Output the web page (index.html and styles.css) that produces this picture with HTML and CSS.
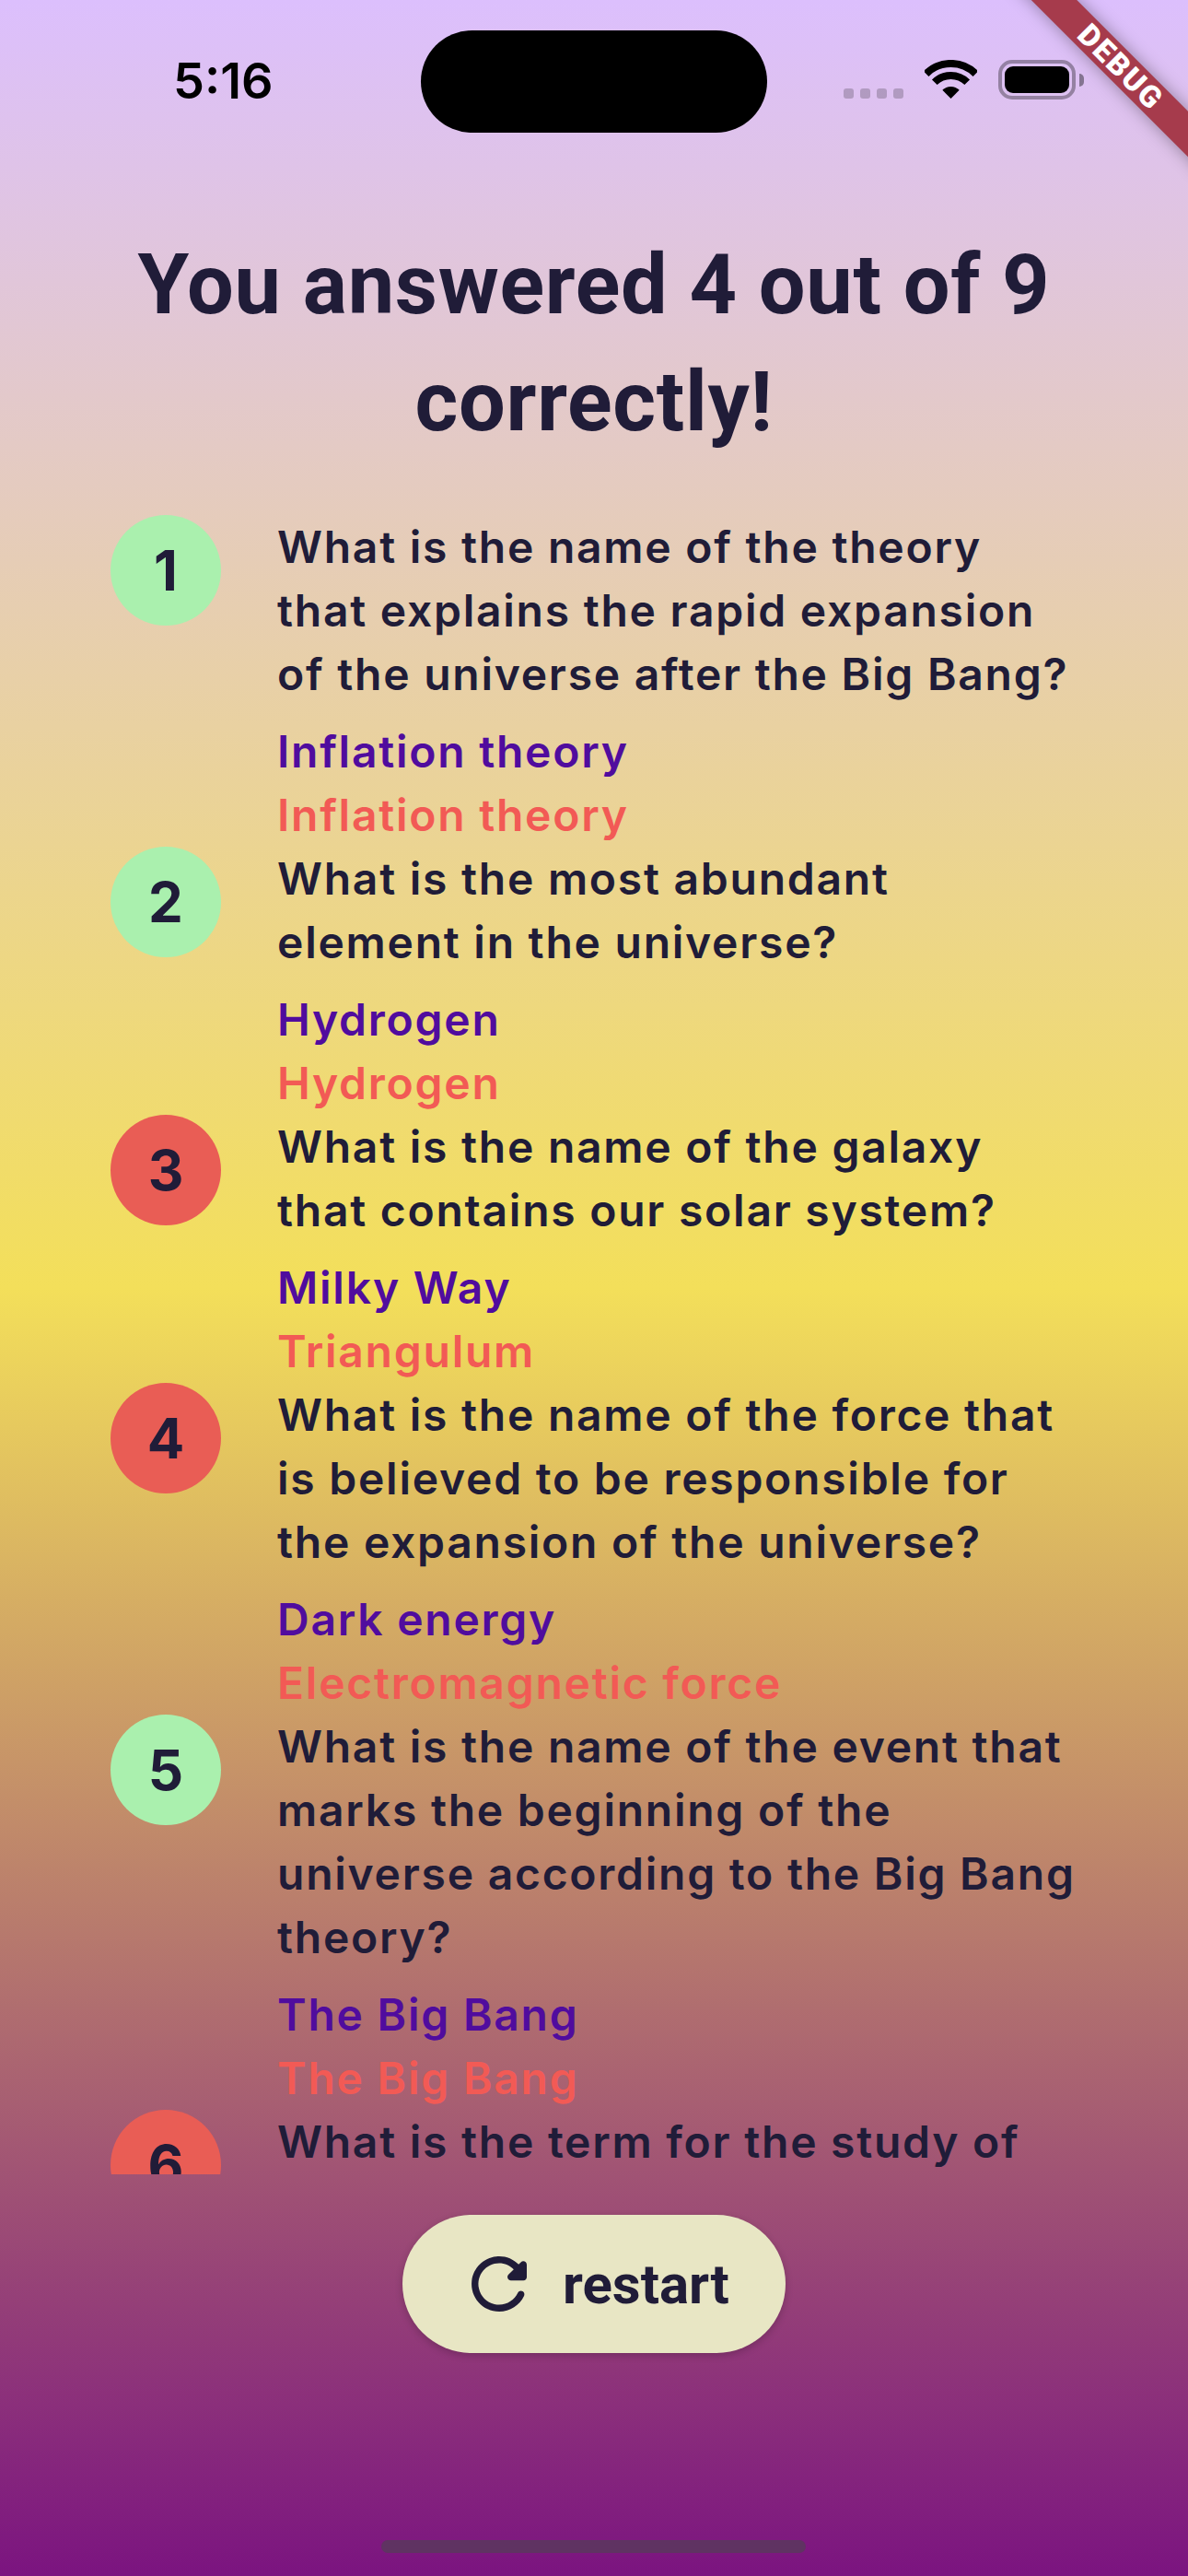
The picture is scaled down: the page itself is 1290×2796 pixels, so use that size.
FILE: index.html
```html
<!DOCTYPE html>
<html lang="en">
<head>
  <meta charset="UTF-8" />
  <title>Quiz Results</title>
  <link rel="stylesheet" href="styles.css">
</head>
<body>

<main class="phone">
  <div class="status-bar">
    <span class="time">5:16</span>
    <div class="island"></div>
    <div class="status-icons">
      <div class="signal"><i></i><i></i><i></i><i></i></div>
      <svg class="wifi" width="57" height="42" viewBox="0 0 57 42">
        <path d="M1.6 15.1A38 38 0 0 1 55.4 15.1" fill="none" stroke="#000" stroke-width="8"/>
        <path d="M10.8 24.3A25 25 0 0 1 46.2 24.3" fill="none" stroke="#000" stroke-width="8"/>
        <path d="M28.5 42L19.3 32.8A13 13 0 0 1 37.7 32.8Z" fill="#000"/>
      </svg>
      <div class="battery"><div class="battery-level"></div></div>
      <div class="battery-cap"></div>
    </div>
  </div>

  <h1 class="score">You answered 4 out of 9 correctly!</h1>

  <section class="summary">
    <article class="row">
      <div class="badge right">1</div>
      <div class="row-text">
        <p class="question">What is the name of the theory that explains the rapid expansion of the universe after the Big Bang?</p>
        <p class="correct">Inflation theory</p>
        <p class="chosen">Inflation theory</p>
      </div>
    </article>
    <article class="row">
      <div class="badge right">2</div>
      <div class="row-text">
        <p class="question">What is the most abundant element in the universe?</p>
        <p class="correct">Hydrogen</p>
        <p class="chosen">Hydrogen</p>
      </div>
    </article>
    <article class="row">
      <div class="badge wrong">3</div>
      <div class="row-text">
        <p class="question">What is the name of the galaxy that contains our solar system?</p>
        <p class="correct">Milky Way</p>
        <p class="chosen">Triangulum</p>
      </div>
    </article>
    <article class="row">
      <div class="badge wrong">4</div>
      <div class="row-text">
        <p class="question">What is the name of the force that is believed to be responsible for the expansion of the universe?</p>
        <p class="correct">Dark energy</p>
        <p class="chosen">Electromagnetic force</p>
      </div>
    </article>
    <article class="row">
      <div class="badge right">5</div>
      <div class="row-text">
        <p class="question">What is the name of the event that marks the beginning of the universe according to the Big Bang theory?</p>
        <p class="correct">The Big Bang</p>
        <p class="chosen">The Big Bang</p>
      </div>
    </article>
    <article class="row">
      <div class="badge wrong">6</div>
      <div class="row-text">
        <p class="question">What is the term for the study of</p>
      </div>
    </article>
  </section>

  <button class="restart" type="button">
    <svg width="90" height="90" viewBox="0 0 24 24">
      <path fill="#201c38" d="M17.65 6.35c-1.63-1.63-3.94-2.57-6.48-2.31-3.67.37-6.69 3.35-7.1 7.02C3.52 15.91 7.27 20 12 20c3.19 0 5.93-1.87 7.21-4.56.32-.67-.16-1.44-.9-1.44-.37 0-.72.2-.88.53-1.13 2.43-3.84 3.97-6.8 3.31-2.22-.49-4.01-2.3-4.48-4.52C5.31 9.44 8.26 6 12 6c1.66 0 3.14.69 4.22 1.78l-1.51 1.51c-.63.63-.19 1.71.7 1.71H19c.55 0 1-.45 1-1V6.41c0-.89-1.08-1.34-1.71-.71l-.64.65z"/>
    </svg>
    <span>restart</span>
  </button>

  <div class="home-bar"></div>
  <div class="debug-banner">DEBUG</div>
</main>

</body>
</html>
```

FILE: styles.css
```css
* {
  box-sizing: border-box;
}

body {
  margin: 0;
  font-family: Roboto, sans-serif;
  color: #201c38;
}

.phone {
  position: relative;
  width: 1290px;
  height: 2796px;
  overflow: hidden;
  display: flex;
  flex-direction: column;
  align-items: center;
  background: linear-gradient(180deg, #dcbffd 0%, #f3df5a 50%, #7b1480 100%);
}

/* status bar */
.status-bar {
  width: 100%;
  height: 111px;
  margin-top: 33px;
  padding-left: 188px;
  display: flex;
  flex-shrink: 0;
}

.time {
  width: 269px;
  margin-top: 25px;
  font-family: Inter, sans-serif;
  font-size: 54px;
  font-weight: 600;
  line-height: 60px;
  color: #000;
}

.island {
  width: 376px;
  height: 111px;
  background: #000;
  border-radius: 56px;
}

.status-icons {
  margin-left: 83px;
  margin-top: 32px;
  height: 43px;
  display: flex;
  align-items: flex-end;
}

.signal {
  display: flex;
  gap: 7px;
  margin-bottom: 1px;
}

.signal i {
  width: 11px;
  height: 11px;
  border-radius: 3px;
  background: rgba(0, 0, 0, 0.2);
}

.wifi {
  margin-left: 23px;
  margin-bottom: 1px;
}

.battery {
  width: 84px;
  height: 43px;
  margin-left: 23px;
  padding: 3px;
  border: 4px solid rgba(0, 0, 0, 0.33);
  border-radius: 15px;
}

.battery-level {
  height: 100%;
  background: #000;
  border-radius: 9px;
}

.battery-cap {
  width: 5px;
  height: 14px;
  margin: 0 0 14px 4px;
  background: rgba(0, 0, 0, 0.4);
  border-radius: 0 5px 5px 0;
}

/* heading */
.score {
  width: 1050px;
  margin: 102px 0 0;
  font-size: 90px;
  font-weight: 700;
  line-height: 127px;
  letter-spacing: 0.7px;
  text-align: center;
}

/* results list */
.summary {
  width: 100%;
  height: 1801px;
  margin-top: 59px;
  padding: 0 120px;
  overflow: hidden;
  flex-shrink: 0;
}

.row {
  display: flex;
  gap: 61px;
  align-items: flex-start;
}

.badge {
  width: 120px;
  height: 120px;
  flex-shrink: 0;
  border-radius: 50%;
  display: flex;
  align-items: center;
  justify-content: center;
  font-family: Inter, sans-serif;
  font-size: 60px;
  font-weight: 700;
}

.badge.right {
  background: #aaf0ae;
}

.badge.wrong {
  background: #e95d55;
}

.row-text {
  flex: 1;
}

.row-text p {
  margin: 0;
  font-family: Inter, sans-serif;
  font-size: 48px;
  font-weight: 640;
  line-height: 69px;
  letter-spacing: 1.75px;
}

.row-text .question {
  margin-bottom: 15px;
}

.correct {
  color: #500c9e;
}

.chosen {
  color: #f25a55;
}

/* restart button */
.restart {
  width: 416px;
  height: 150px;
  margin-top: 44px;
  padding: 0 0 0 60px;
  flex-shrink: 0;
  display: flex;
  align-items: center;
  gap: 24px;
  font-family: Roboto, sans-serif;
  font-size: 60px;
  font-weight: 700;
  color: #201c38;
  background: #e8e6c4;
  border: none;
  border-radius: 75px;
  box-shadow: 0 3px 9px rgba(0, 0, 0, 0.2);
}

.home-bar {
  position: absolute;
  left: 414px;
  top: 2757px;
  width: 461px;
  height: 14px;
  background: #5f3362;
  border-radius: 7px;
}

.debug-banner {
  position: absolute;
  left: 1067px;
  top: 55px;
  width: 300px;
  height: 35px;
  background: #a63b4c;
  box-shadow: 0 0 18px rgba(0, 0, 0, 0.35);
  transform: rotate(45deg);
  color: #fff;
  font-size: 33px;
  font-weight: 900;
  line-height: 35px;
  letter-spacing: 2px;
  text-align: center;
}
```
